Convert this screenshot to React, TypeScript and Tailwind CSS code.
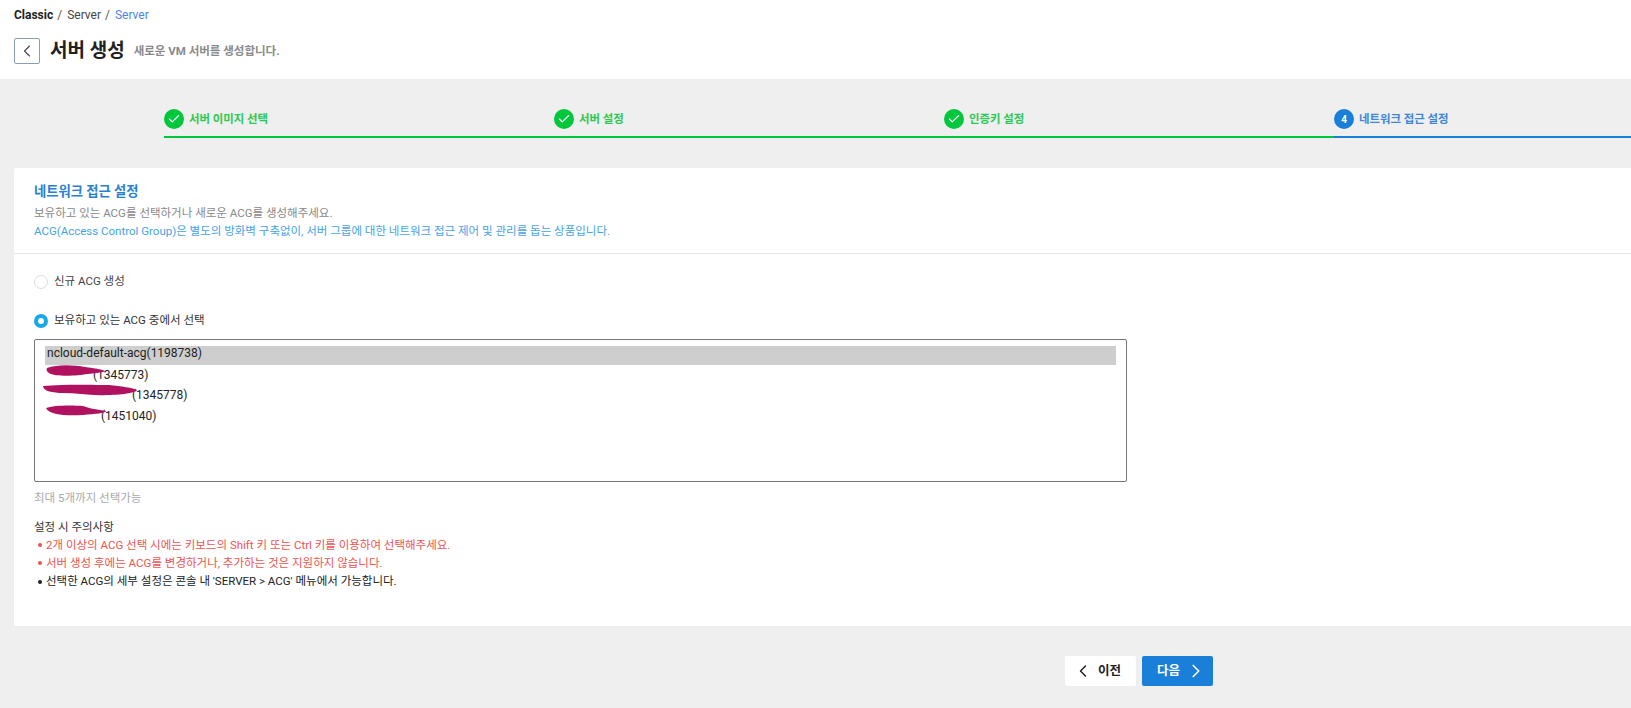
import { Check, ChevronLeft, ChevronRight } from 'lucide-react';

const font = { fontFamily: 'Roboto, "Noto Sans CJK KR", sans-serif' };

const steps = [
  { label: '서버 이미지 선택', done: true },
  { label: '서버 설정', done: true },
  { label: '인증키 설정', done: true },
  { label: '네트워크 접근 설정', done: false },
];

function Step({ label, done, index }: { label: string; done: boolean; index: number }) {
  return (
    <div className={`h-[29px] border-b-2 ${done ? 'w-[390px] border-[#00c73c]' : 'flex-1 border-[#1a7fd9]'}`}>
      <div className="flex items-center gap-[5px]">
        <div className={`flex h-5 w-5 items-center justify-center rounded-full ${done ? 'bg-[#00c73c]' : 'bg-[#1a7fd9]'}`}>
          {done ? (
            <Check size={14} strokeWidth={2} className="text-white" />
          ) : (
            <span className="text-[10px] font-bold text-white">{index + 1}</span>
          )}
        </div>
        <span className={`mt-[1px] text-[11.4px] font-bold ${done ? 'text-[#2cc84f]' : 'text-[#3f86d8]'}`}>{label}</span>
      </div>
    </div>
  );
}

// 가려진 ACG 이름 위의 낙서
function Scribble({ width, d }: { width: number; d: string }) {
  return (
    <span className="relative inline-block h-3" style={{ width }}>
      <svg className="absolute left-0 top-[-2px] overflow-visible" width={width} height="18" viewBox={`0 0 ${width} 18`}>
        <path d={d} fill="#b0125f" />
      </svg>
    </span>
  );
}

export default function App() {
  return (
    <div className="h-[708px] w-[1631px] overflow-hidden bg-[#efefef] text-[#222]" style={font}>
      <header className="h-[79px] bg-white pl-[14px]">
        <div className="flex h-[29px] items-center gap-[4px] text-[12px]">
          <span className="font-bold text-[#222]">Classic</span>
          <span className="text-[#555]">/</span>
          <span className="ml-[1px] text-[#444]">Server</span>
          <span className="text-[#555]">/</span>
          <span className="ml-[1px] text-[#4a86e8]">Server</span>
        </div>
        <div className="mt-[8px] flex items-center">
          <button className="flex h-[26px] w-[26px] items-center justify-center rounded-[2px] border border-[#8a9cb8] bg-white">
            <ChevronLeft size={20} strokeWidth={1.3} className="text-[#445]" />
          </button>
          <h1 className="ml-[10px] text-[19px] font-bold text-[#222]">서버 생성</h1>
          <p className="ml-[9px] text-[11.5px] font-bold text-[#8a8a8a]">새로운 VM 서버를 생성합니다.</p>
        </div>
      </header>

      <div className="flex pl-[164px] pt-[30px]">
        {steps.map((step, i) => (
          <Step key={step.label} label={step.label} done={step.done} index={i} />
        ))}
      </div>

      <section className="ml-[14px] mt-[30px] h-[458px] rounded-l-[2px] bg-white">
        <div className="h-[86px] border-b border-[#e5e5e5] pl-[20px] pt-[15px]">
          <h2 className="text-[13.3px] font-bold leading-[18px] text-[#2a7fd5]">네트워크 접근 설정</h2>
          <p className="mt-[4px] text-[11.5px] leading-[17px] text-[#888]">보유하고 있는 ACG를 선택하거나 새로운 ACG를 생성해주세요.</p>
          <p className="text-[11.5px] leading-[18px] text-[#46a3e8]">
            ACG(Access Control Group)은 별도의 방화벽 구축없이, 서버 그룹에 대한 네트워크 접근 제어 및 관리를 돕는 상품입니다.
          </p>
        </div>

        <div className="pl-[20px]">
          <label className="mt-[18px] flex h-5 items-center gap-[6px] text-[11.5px] text-[#444]">
            <span className="h-[14px] w-[14px] rounded-full border border-[#ddd] bg-white" />
            신규 ACG 생성
          </label>
          <label className="mt-[19px] flex h-5 items-center gap-[6px] text-[11.5px] text-[#333]">
            <span className="flex h-[14px] w-[14px] items-center justify-center rounded-full bg-[#17a8ea]">
              <span className="h-[6px] w-[6px] rounded-full bg-white" />
            </span>
            보유하고 있는 ACG 중에서 선택
          </label>

          <div className="mt-[8px] h-[143px] w-[1093px] rounded-[2px] border border-[#767676] px-[10px] pt-[6px] text-[12px] leading-[15px] text-[#222]">
            <div className="mb-[1.7px] h-[19px] bg-[#cecece] px-[2px]">ncloud-default-acg(1198738)</div>
            <div className="h-[20.7px] px-[2px]">
              <Scribble width={46} d="M0 3C10 -1 28 0 38 2C48 3 56 5 58 6C58 7 50 8 40 9C30 11 8 12 2 8C0 7 -1 5 0 3Z" />
              (1345773)
            </div>
            <div className="h-[20.7px] px-[2px]">
              <Scribble width={85} d="M-4 1C18 -1 48 0 62 0C74 1 86 3 90 5C90 7 78 10 60 10C44 11 30 8 16 8C6 8 -4 6 -4 1Z" />
              (1345778)
            </div>
            <div className="h-[20.7px] px-[2px]">
              <Scribble width={54} d="M-1 2C6 -1 26 -1 36 0C44 3 54 4 59 5C59 7 48 8 36 9C20 10 2 9 -1 2Z" />
              (1451040)
            </div>
          </div>

          <p className="mt-[8px] text-[11.5px] leading-[16px] text-[#aaa]">최대 5개까지 선택가능</p>
          <p className="mt-[12px] text-[11.5px] leading-[18px] text-[#333]">설정 시 주의사항</p>
          <ul className="text-[11.5px] leading-[18.2px]">
            <li className="flex items-center gap-[4px] pl-[4px] text-[#f0524f]">
              <span className="h-1 w-1 rounded-full bg-[#f0524f]" />
              2개 이상의 ACG 선택 시에는 키보드의 Shift 키 또는 Ctrl 키를 이용하여 선택해주세요.
            </li>
            <li className="flex items-center gap-[4px] pl-[4px] text-[#f0524f]">
              <span className="h-1 w-1 rounded-full bg-[#f0524f]" />
              서버 생성 후에는 ACG를 변경하거나, 추가하는 것은 지원하지 않습니다.
            </li>
            <li className="flex items-center gap-[4px] pl-[4px] text-[#222]">
              <span className="h-1 w-1 rounded-full bg-[#222]" />
              선택한 ACG의 세부 설정은 콘솔 내 'SERVER &gt; ACG' 메뉴에서 가능합니다.
            </li>
          </ul>
        </div>
      </section>

      <div className="mt-[30px] flex gap-[6px] pl-[1065px]">
        <button className="flex h-[30px] w-[71px] items-center justify-center gap-[5px] rounded-[2px] bg-white pr-[7px] text-[12.5px] font-bold text-[#222]">
          <ChevronLeft size={20} strokeWidth={1.8} />
          이전
        </button>
        <button className="flex h-[30px] w-[71px] items-center justify-center gap-[5px] rounded-[2px] bg-[#1a7fd9] pl-[9px] text-[12.5px] font-bold text-white">
          다음
          <ChevronRight size={22} strokeWidth={1.8} />
        </button>
      </div>
    </div>
  );
}
